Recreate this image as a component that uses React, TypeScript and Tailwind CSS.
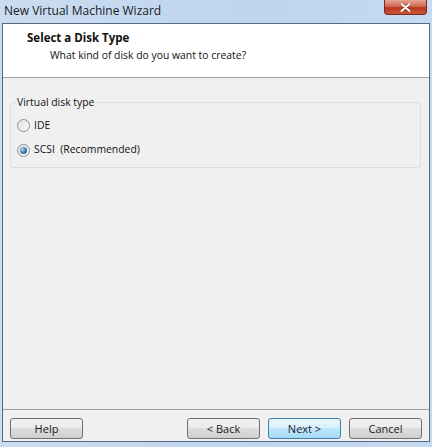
const font = "font-['Open_Sans','Noto_Sans',sans-serif]";

function Radio({ checked }: { checked?: boolean }) {
  return (
    <span className="relative flex h-[13px] w-[13px] items-center justify-center rounded-full border border-[#8e8f8f] bg-gradient-to-br from-[#e0e0e0] to-[#fafafa]">
      {checked && (
        <span className="h-[7px] w-[7px] rounded-full bg-[radial-gradient(circle_at_35%_35%,#a8d8f8,#1c5f8f_70%)]" />
      )}
    </span>
  );
}

function Button({ label, primary }: { label: string; primary?: boolean }) {
  return (
    <button
      className={
        "h-[21px] w-[73px] rounded-[3px] border text-[11px] leading-none text-[#1a1a1a] " +
        (primary
          ? "border-[#3c7fb1] bg-[linear-gradient(#eaf6fd_0%,#d9f0fc_45%,#bee6fd_50%,#a7d9f5_100%)]"
          : "border-[#707070] bg-[linear-gradient(#f2f2f2_0%,#ebebeb_45%,#dddddd_50%,#cfcfcf_100%)]")
      }
    >
      {label}
    </button>
  );
}

export default function App() {
  return (
    <div className={"flex h-[447px] w-[432px] flex-col bg-[linear-gradient(90deg,#cadcf1,#bed5ee_60%,#c6daf1)] " + font}>
      <div className="flex h-[23px] items-start justify-between">
        <div className="pl-[4px] pt-[2px] text-[12px] text-[#1b1b1b]">New Virtual Machine Wizard</div>
        <div className="mr-[5px] flex h-[15px] w-[43px] items-center justify-center rounded-b-[4px] border border-t-0 border-[#7a2a1e] bg-[linear-gradient(#e5a394,#cf6a53_45%,#b8351c_55%,#c9563a)]">
          <svg width="11" height="9" viewBox="0 0 11 9">
            <path d="M1.5 1 L9.5 8 M9.5 1 L1.5 8" stroke="#5a1508" strokeWidth="3.2" strokeLinecap="round" opacity="0.5" />
            <path d="M1.5 1 L9.5 8 M9.5 1 L1.5 8" stroke="#fff" strokeWidth="2" strokeLinecap="round" />
          </svg>
        </div>
      </div>
      <div className="mx-[2px] mb-[5px] flex flex-1 flex-col border border-[#566a86] bg-[#f0f0f0]">
        <div className="h-[54px] border-b border-[#a0a0a0] bg-white pl-[24px] pt-[5px]">
          <div className="text-[11.5px] font-bold text-[#111]">Select a Disk Type</div>
          <div className="pl-[23px] pt-[2px] text-[10.4px] text-[#111]">What kind of disk do you want to create?</div>
        </div>
        <div className="flex-1 px-[7px] pt-[17px]">
          <fieldset className="mr-[1px] rounded-[3px] border border-[#d5dfe5] px-[6px] pb-[9px]">
            <legend className="-ml-[1px] px-[1px] text-[10.4px] text-[#111]">Virtual disk type</legend>
            <div className="mt-[7px] flex items-center gap-[4px] text-[10.4px] text-[#111]">
              <Radio />
              <span>IDE</span>
            </div>
            <div className="mt-[9px] flex items-center gap-[4px] text-[10.4px] text-[#111]">
              <Radio checked />
              <span>SCSI&nbsp;&nbsp;(Recommended)</span>
            </div>
          </fieldset>
        </div>
        <div className="h-[32px] border-t border-[#a0a0a0] px-[7px] pt-[8px]">
          <div className="flex items-start">
            <Button label="Help" />
            <div className="flex-1" />
            <div className="flex gap-[8px]">
              <Button label="< Back" />
              <Button label="Next >" primary />
              <Button label="Cancel" />
            </div>
          </div>
        </div>
      </div>
    </div>
  );
}
